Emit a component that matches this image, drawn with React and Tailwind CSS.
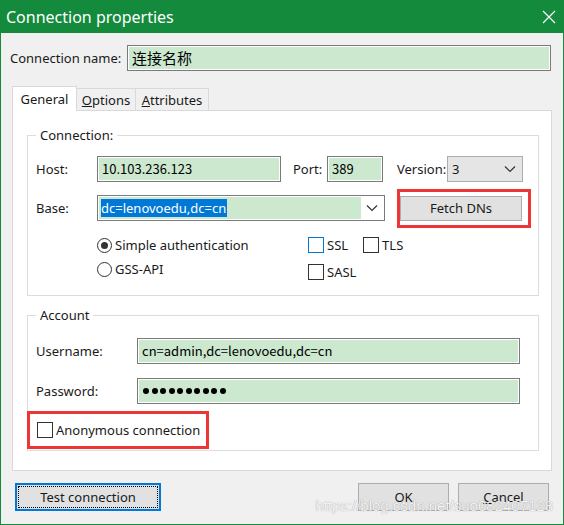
import React from 'react';

const font = { fontFamily: '"Noto Sans", "Noto Sans CJK SC", sans-serif' };

const Field = ({ className = '', children }) => (
  <div className={`h-[26px] border border-[#7a7a7a] bg-white p-[1px] ${className}`}>
    <div className="h-full bg-[#cce8cf] flex items-center pl-[3px] text-[13px] text-black" style={{ fontFamily: '"Noto Sans CJK SC", "DejaVu Sans", sans-serif' }}>
      {children}
    </div>
  </div>
);

const Chevron = () => (
  <svg width="12" height="8" viewBox="0 0 12 8" fill="none">
    <path d="M1 1.5 L6 6.5 L11 1.5" stroke="#333" strokeWidth="1.2" />
  </svg>
);

const Checkbox = ({ label, focus }) => (
  <div className="flex items-center gap-[3px]">
    <div className={`w-[16px] h-[16px] bg-white border ${focus ? 'border-[#0078d7]' : 'border-[#333]'}`} />
    <span>{label}</span>
  </div>
);

const Radio = ({ label, checked }) => (
  <div className="flex items-center gap-[3px]">
    <div className="w-[15px] h-[15px] rounded-full border border-[#333] bg-white flex items-center justify-center">
      {checked && <div className="w-[7px] h-[7px] rounded-full bg-[#333]" />}
    </div>
    <span>{label}</span>
  </div>
);

const Group = ({ title, className = '', children }) => (
  <div className={`relative border border-[#dcdcdc] ${className}`}>
    <span className="absolute -top-[10px] left-[8px] bg-white px-[4px] leading-[18px]">{title}</span>
    {children}
  </div>
);

const Button = ({ children, className = '' }) => (
  <div className={`h-[28px] border border-[#adadad] bg-[#e1e1e1] flex items-center justify-center ${className}`}>
    {children}
  </div>
);

export default function App() {
  return (
    <div className="w-[564px] h-[525px] bg-[#138a3c] flex flex-col text-[13px] leading-[18px] whitespace-nowrap text-[#1a1a1a] overflow-hidden" style={font}>
      {/* title bar */}
      <div className="h-[33px] flex items-center justify-between pl-[6px] pr-[5px] text-white text-[16px] shrink-0">
        <span>Connection properties</span>
        <svg width="16" height="16" viewBox="0 0 16 16" className="mr-[2px]">
          <path d="M2 2 L14 14 M14 2 L2 14" stroke="#fff" strokeWidth="1.2" />
        </svg>
      </div>

      <div className="relative flex-1 mx-[1px] mb-[1px] bg-[#f0f0f0] flex flex-col">
        {/* connection name */}
        <div className="flex items-center mt-[12px] pl-[9px]">
          <span className="w-[117px]">Connection name:</span>
          <Field className="w-[424px]">
            <span style={{ fontFamily: '"Noto Sans CJK SC", sans-serif' }} className="text-[15px]">连接名称</span>
          </Field>
        </div>

        {/* tabs */}
        <div className="flex items-end mt-[14px] ml-[11px] h-[25px]">
          <div className="h-[25px] w-[65px] bg-white border border-b-0 border-[#d9d9d9] flex items-center justify-center relative z-10 -mb-[1px]">General</div>
          <div className="h-[22px] w-[59px] bg-[#f0f0f0] border border-b-0 border-l-0 border-[#d9d9d9] flex items-center justify-center">
            <span><span className="underline">O</span>ptions</span>
          </div>
          <div className="h-[22px] w-[73px] bg-[#f0f0f0] border border-b-0 border-l-0 border-[#d9d9d9] flex items-center justify-center">
            <span><span className="underline">A</span>ttributes</span>
          </div>
        </div>

        {/* tab panel */}
        <div className="ml-[11px] w-[540px] h-[361px] bg-white border border-[#d9d9d9] pt-[24px] pl-[14px]">
          <Group title="Connection:" className="w-[512px] h-[161px]">
            <div className="flex items-center mt-[20px]">
              <span className="w-[61px] ml-[8px]">Host:</span>
              <Field className="w-[184px]">10.103.236.123</Field>
              <span className="ml-[12px] w-[34px]">Port:</span>
              <Field className="w-[56px]">389</Field>
              <span className="ml-[14px] w-[50px]">Version:</span>
              <div className="w-[76px] h-[26px] border border-[#adadad] bg-[#e5e5e5] flex items-center justify-between pl-[4px] pr-[6px]">
                <span>3</span>
                <Chevron />
              </div>
            </div>

            <div className="flex items-center mt-[13px]">
              <span className="w-[61px] ml-[8px]">Base:</span>
              <div className="w-[288px] h-[26px] border border-[#7a7a7a] bg-white p-[1px] flex items-center">
                <div className="w-[262px] h-full bg-[#cce8cf] flex items-center pl-[2px]">
                  <span className="bg-[#0078d7] text-white leading-[18px] pr-[1px]">dc=lenovoedu,dc=cn</span>
                </div>
                <div className="flex-1 flex justify-center">
                  <Chevron />
                </div>
              </div>
              <div className="relative ml-[15px]">
                <Button className="w-[122px] !h-[25px]">Fetch DNs</Button>
                <div className="absolute -left-[3px] -top-[7px] w-[134px] h-[39px] border-[3px] border-[#ee3535]" />
              </div>
            </div>

            <div className="flex mt-[15px]">
              <div className="flex flex-col gap-[6px] ml-[69px] w-[210px]">
                <Radio label="Simple authentication" checked />
                <Radio label="GSS-API" />
              </div>
              <div className="flex flex-col gap-[9px] ml-[1px]">
                <div className="flex gap-[15px]">
                  <Checkbox label="SSL" focus />
                  <Checkbox label="TLS" />
                </div>
                <Checkbox label="SASL" />
              </div>
            </div>
          </Group>

          <Group title="Account" className="w-[512px] h-[136px] mt-[19px]">
            <div className="flex items-center mt-[22px]">
              <span className="w-[101px] ml-[8px]">Username:</span>
              <Field className="w-[383px]">cn=admin,dc=lenovoedu,dc=cn</Field>
            </div>
            <div className="flex items-center mt-[14px]">
              <span className="w-[101px] ml-[8px]">Password:</span>
              <Field className="w-[383px]">
                <div className="flex gap-[2.5px] pl-[1px]">
                  {Array.from({ length: 10 }).map((_, i) => (
                    <div key={i} className="w-[6px] h-[6px] rounded-full bg-black" />
                  ))}
                </div>
              </Field>
            </div>
            <div className="mt-[7px] -ml-[1px] w-[182px] h-[38px] border-[3px] border-[#ee3535] flex items-center pl-[7px]">
              <Checkbox label="Anonymous connection" />
            </div>
          </Group>
        </div>

        {/* buttons */}
        <div className="flex items-center mt-[12px] px-[14px]">
          <div className="w-[146px] h-[28px] border-[2px] border-[#0078d7] bg-[#e1e1e1] p-[1px]">
            <div className="h-full border border-dotted border-black flex items-center justify-center">Test connection</div>
          </div>
          <div className="flex-1" />
          <Button className="w-[91px]">OK</Button>
          <Button className="w-[91px] ml-[9px]">
            <span><span className="underline">C</span>ancel</span>
          </Button>
        </div>

        <span
          className="absolute right-[10px] bottom-[10px] text-[15px] leading-[16px] text-white/90 [text-shadow:0_0_1px_rgba(0,0,0,0.45)] pointer-events-none"
          style={{ fontFamily: '"Liberation Sans", sans-serif' }}
        >
          https://blog.csdn.net/suo082407128
        </span>
      </div>
    </div>
  );
}
